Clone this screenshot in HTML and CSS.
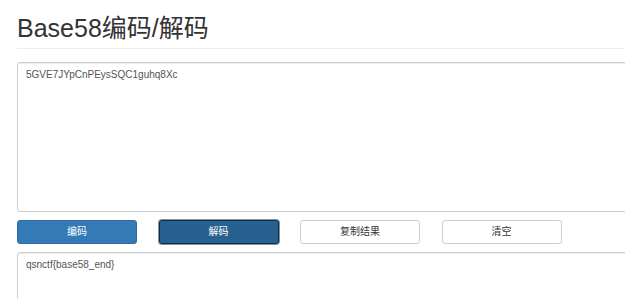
FILE: index.html
```html
<!DOCTYPE html>
<html lang="zh-CN">
<head>
<meta charset="utf-8">
<title>Base58编码/解码</title>
<link rel="stylesheet" href="styles.css">
</head>
<body>
<div class="page">
  <div class="page-header">
    <h1 class="title">Base58编码/解码</h1>
  </div>
  <textarea class="field field-input">5GVE7JYpCnPEysSQC1guhq8Xc</textarea>
  <div class="actions">
    <button class="btn btn-primary">编码</button>
    <button class="btn btn-primary btn-active">解码</button>
    <button class="btn btn-default">复制结果</button>
    <button class="btn btn-default">清空</button>
  </div>
  <textarea class="field field-output">qsnctf{base58_end}</textarea>
</div>
</body>
</html>
```

FILE: styles.css
```css
html, body {
  margin: 0;
  padding: 0;
  overflow: hidden;
  background: #fff;
}
body {
  font-family: "Liberation Sans", Arial, "Noto Sans CJK SC", sans-serif;
  color: #333;
}
.page {
  width: 760px;
  padding: 0 0 0 17px;
}
.page-header {
  border-bottom: 1px solid #eee;
  padding-top: 13px;
  padding-bottom: 5px;
  margin-bottom: 13px;
}
.title {
  margin: 0;
  font-size: 25px;
  font-weight: 400;
  line-height: 30px;
  color: #333;
}
.field {
  display: block;
  box-sizing: border-box;
  width: 700px;
  margin: 0;
  padding: 5px 8px;
  border: 1px solid #ccc;
  border-radius: 3px;
  box-shadow: inset 0 1px 1px rgba(0,0,0,.075);
  font-family: "Liberation Sans", Arial, "Noto Sans CJK SC", sans-serif;
  font-size: 10px;
  line-height: 14px;
  color: #555;
  resize: none;
  background: #fff;
}
.field-input {
  height: 150px;
}
.field-output {
  height: 120px;
}
.actions {
  display: flex;
  gap: 21.5px;
  margin: 8px 0;
}
.btn {
  box-sizing: border-box;
  width: 120px;
  height: 24px;
  margin: 0;
  padding: 0;
  border: 1px solid transparent;
  border-radius: 3px;
  font-family: "Liberation Sans", Arial, "Noto Sans CJK SC", sans-serif;
  font-size: 10px;
  line-height: 22px;
  text-align: center;
}
.btn-primary {
  background: #337ab7;
  border-color: #2e6da4;
  color: #fff;
}
.btn-active {
  background: #286090;
  border-color: #122b40;
  box-shadow: 0 0 0 1px #8a939b;
}
.btn-default {
  background: #fff;
  border-color: #ccc;
  color: #333;
}
```
